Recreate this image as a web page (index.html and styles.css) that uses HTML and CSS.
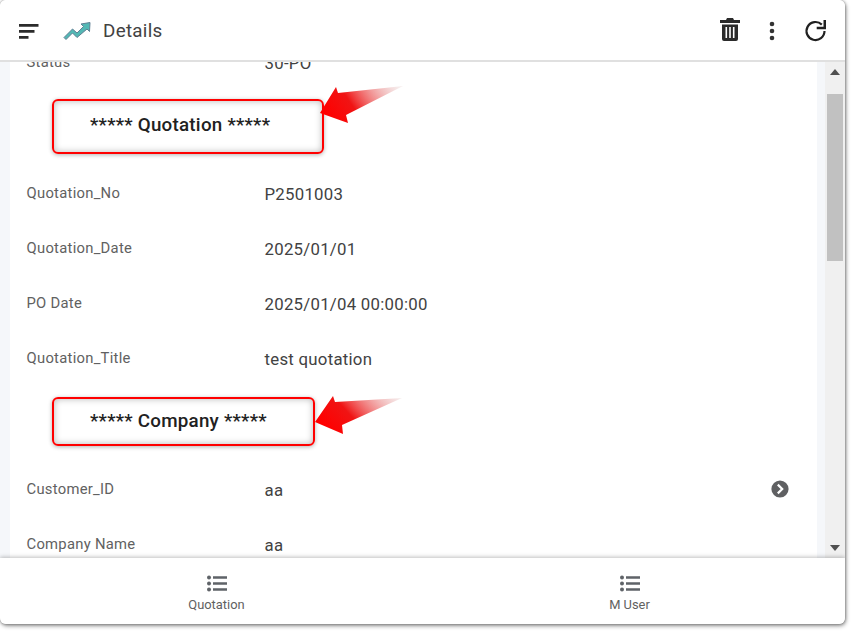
FILE: index.html
```html
<!DOCTYPE html>
<html lang="en">
<head>
<meta charset="utf-8">
<title>Details</title>
<link rel="stylesheet" href="styles.css">
</head>
<body>
<div class="app">
  <header class="topbar">
    <svg class="menu-icon" viewBox="0 0 20 16"><path d="M0 1h19.5v2.8H0zM0 7h15.5v2.8H0zM0 13h9.5v2.8H0z"/></svg>
    <svg class="logo" viewBox="0 0 28 20"><path d="M1 16.5 9.5 8l4.5 4 6.5-6.5-2.5-2.5 9-1.5-.5 9-2.5-2.5L14 16.5 9.5 12 3 18.5z" fill="#53b8b4" stroke="#5f7f93" stroke-width="1"/></svg>
    <h1 class="title">Details</h1>
    <div class="actions">
      <svg class="trash" viewBox="0 0 20 23"><path d="M7 0h6l1 2h6v3H0V2h6zM2 6.5h16V21a2 2 0 0 1-2 2H4a2 2 0 0 1-2-2zM5.5 9v11h1.6V9zM9.2 9v11h1.6V9zM12.9 9v11h1.6V9z" fill-rule="evenodd"/></svg>
      <svg class="dots" viewBox="0 0 6 20"><circle cx="3" cy="3" r="2.3"/><circle cx="3" cy="10" r="2.3"/><circle cx="3" cy="17" r="2.3"/></svg>
      <svg class="refresh" viewBox="0 0 24 24"><path d="M20.5 12a9 9 0 1 1-2.7-6.4" fill="none" stroke="#212121" stroke-width="2.2"/><path d="M22 1v9.3h-9.3V7.8h6.8V1z"/></svg>
    </div>
  </header>

  <main class="body">
    <div class="pane">
      <div class="list">
        <div class="row"><span class="label">Status</span><span class="value">30-PO</span></div>

        <div class="callout callout-quotation">
          <span class="callout-text">***** Quotation *****</span>
          <svg class="arrow" viewBox="0 0 84 38"><defs><linearGradient id="ag1" x1="0" y1="0.5" x2="1" y2="0.2"><stop offset="0" stop-color="#f00"/><stop offset=".35" stop-color="#f01414"/><stop offset="1" stop-color="#e8d0d0" stop-opacity=".4"/></linearGradient></defs><path d="M1 27 17 1l2 6 65-7-57 29 2 8z" fill="url(#ag1)"/></svg>
        </div>

        <div class="row"><span class="label">Quotation_No</span><span class="value">P2501003</span></div>
        <div class="row"><span class="label">Quotation_Date</span><span class="value">2025/01/01</span></div>
        <div class="row"><span class="label">PO Date</span><span class="value">2025/01/04 00:00:00</span></div>
        <div class="row"><span class="label">Quotation_Title</span><span class="value">test quotation</span></div>

        <div class="callout callout-company">
          <span class="callout-text">***** Company *****</span>
          <svg class="arrow" viewBox="0 0 88 38"><defs><linearGradient id="ag2" x1="0" y1="0.5" x2="1" y2="0.1"><stop offset="0" stop-color="#f00"/><stop offset=".35" stop-color="#f01414"/><stop offset="1" stop-color="#e8d0d0" stop-opacity=".4"/></linearGradient></defs><path d="M1 26 19 0l2 6 67-4-60 27 1 9z" fill="url(#ag2)"/></svg>
        </div>

        <div class="row"><span class="label">Customer_ID</span><span class="value">aa</span>
          <svg class="go" viewBox="0 0 18 18"><circle cx="9" cy="9" r="8.6" fill="#5f6062"/><path d="M6.8 4.6 11.2 9l-4.4 4.4" fill="none" stroke="#fff" stroke-width="2.2"/></svg>
        </div>
        <div class="row"><span class="label">Company Name</span><span class="value">aa</span></div>
      </div>
    </div>
    <div class="gutter"></div>
    <div class="scrollbar">
      <div class="tri tri-up"></div>
      <div class="thumb"></div>
      <div class="tri tri-down"></div>
    </div>
  </main>

  <nav class="tabs">
    <div class="tab">
      <svg class="tab-icon" viewBox="0 0 20 17"><circle cx="2" cy="2.5" r="2"/><circle cx="2" cy="8.5" r="2"/><circle cx="2" cy="14.5" r="2"/><path d="M6 1.3h14v2.4H6zM6 7.3h14v2.4H6zM6 13.3h14v2.4H6z"/></svg>
      <span class="tab-label">Quotation</span>
    </div>
    <div class="tab">
      <svg class="tab-icon" viewBox="0 0 20 17"><circle cx="2" cy="2.5" r="2"/><circle cx="2" cy="8.5" r="2"/><circle cx="2" cy="14.5" r="2"/><path d="M6 1.3h14v2.4H6zM6 7.3h14v2.4H6zM6 13.3h14v2.4H6z"/></svg>
      <span class="tab-label">M User</span>
    </div>
  </nav>
</div>
</body>
</html>
```
FILE: styles.css
```css
* { box-sizing: border-box; }
html, body { margin: 0; height: 100%; background: #fff; overflow: hidden; }
body { font-family: Roboto, "Liberation Sans", sans-serif; color: #424242; }

.app {
  width: 845px;
  height: 624px;
  display: flex;
  flex-direction: column;
  background: #fff;
  border-radius: 6px;
  overflow: hidden;
  box-shadow: 0 0 3px rgba(0,0,0,.45), 1px 2px 4px rgba(0,0,0,.4);
}

.topbar {
  height: 62px;
  flex: none;
  display: flex;
  align-items: center;
  background: #fff;
  border-bottom: 2px solid #e0e0e0;
  padding: 1px 17px 0 18.5px;
  position: relative;
  z-index: 2;
}
.menu-icon { width: 20px; height: 16px; fill: #2b2b2b; flex: none; }
.logo { width: 28px; height: 20px; margin-left: 24.5px; flex: none; }
.title { margin: 1px 0 0 12px; font-size: 18.8px; font-weight: 400; color: #424242; letter-spacing: .3px; }
.actions { margin-left: auto; display: flex; align-items: center; }
.trash { width: 20px; height: 23px; margin-top: -2px; fill: #2b2b2b; }
.dots { width: 6px; height: 20px; margin-left: 29px; fill: #333; }
.refresh { width: 24px; height: 24px; margin-left: 29px; fill: #212121; }

.body {
  flex: 1;
  min-height: 0;
  display: flex;
  background: #f5f7fa;
  padding-left: 10px;
}
.pane { width: 807px; background: #fff; overflow: hidden; }
.list { margin-top: -26px; }
.row {
  height: 55px;
  display: flex;
  align-items: center;
  padding-left: 16.5px;
  padding-bottom: 2px;
  position: relative;
}
.label { width: 238px; font-size: 14.8px; color: #616161; letter-spacing: .27px; position: relative; top: -1px; }
.value { font-size: 16.8px; color: #424242; letter-spacing: .26px; }
.go { position: absolute; left: 761px; top: 17px; width: 18px; height: 18px; }

.callout {
  margin-left: 42px;
  border: 2px solid #f00;
  border-radius: 6px;
  box-shadow: 0 1px 4px rgba(0,0,0,.3), inset 0 0 7px rgba(0,0,0,.28);
  position: relative;
  font-size: 18.8px;
  font-weight: 500;
  color: #212121;
  padding-left: 36px;
}
.callout-text { display: block; letter-spacing: .24px; }
.callout-quotation { width: 272px; height: 55px; margin-top: 8px; margin-bottom: 13px; padding-top: 13px; }
.callout-company { width: 263px; height: 49px; margin-top: 10px; margin-bottom: 17px; padding-top: 11px; }
.arrow { position: absolute; }
.callout-quotation .arrow { left: 265px; top: -15px; width: 84px; height: 38px; }
.callout-company .arrow { left: 260px; top: -3px; width: 88px; height: 38px; }

.gutter { width: 8px; flex: none; }
.scrollbar {
  width: 20px;
  flex: none;
  background: #f0f0f0;
  position: relative;
}
.thumb { position: absolute; top: 32px; left: 2px; width: 16px; height: 167px; background: #c1c1c1; }
.tri { position: absolute; left: 5px; width: 0; height: 0; border-left: 5px solid transparent; border-right: 5px solid transparent; }
.tri-up { top: 7px; border-bottom: 6px solid #505050; }
.tri-down { bottom: 7px; border-top: 6px solid #505050; }

.tabs {
  height: 66px;
  flex: none;
  display: flex;
  padding: 0 9px 0 10px;
  background: #fff;
  box-shadow: 0 -1px 4px rgba(0,0,0,.25);
  position: relative;
  z-index: 2;
}
.tab { flex: 1; display: flex; flex-direction: column; align-items: center; padding-top: 17px; }
.tab-icon { width: 20px; height: 17px; fill: #5f6368; }
.tab-label { margin-top: 5px; font-size: 12.9px; color: #616161; }
```
